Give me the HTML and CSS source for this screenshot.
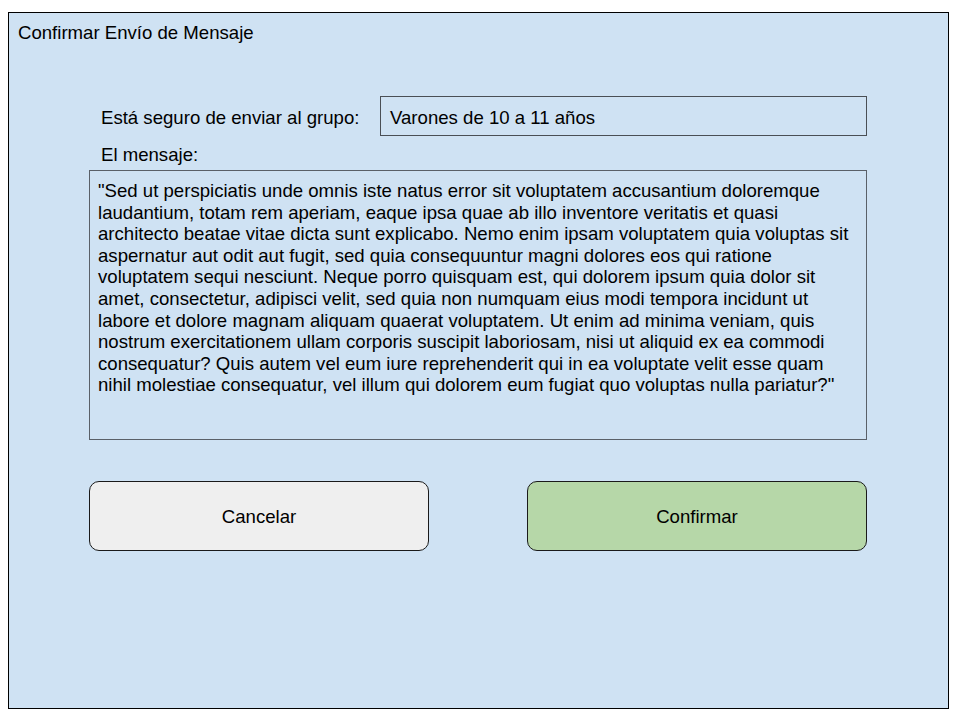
FILE: index.html
```html
<!DOCTYPE html>
<html lang="es">
<head>
<meta charset="utf-8">
<title>Confirmar Envío de Mensaje</title>
<link rel="stylesheet" href="styles.css">
</head>
<body>
<div class="frame">
  <div class="title">Confirmar Envío de Mensaje</div>
  <div class="content">
    <div class="group-row">
      <div class="group-label">Está seguro de enviar al grupo:</div>
      <div class="group-box">Varones de 10 a 11 años</div>
    </div>
    <div class="msg-label">El mensaje:</div>
    <div class="msg-box">"Sed ut perspiciatis unde omnis iste natus error sit voluptatem accusantium doloremque<br>laudantium, totam rem aperiam, eaque ipsa quae ab illo inventore veritatis et quasi<br>architecto beatae vitae dicta sunt explicabo. Nemo enim ipsam voluptatem quia voluptas sit<br>aspernatur aut odit aut fugit, sed quia consequuntur magni dolores eos qui ratione<br>voluptatem sequi nesciunt. Neque porro quisquam est, qui dolorem ipsum quia dolor sit<br>amet, consectetur, adipisci velit, sed quia non numquam eius modi tempora incidunt ut<br>labore et dolore magnam aliquam quaerat voluptatem. Ut enim ad minima veniam, quis<br>nostrum exercitationem ullam corporis suscipit laboriosam, nisi ut aliquid ex ea commodi<br>consequatur? Quis autem vel eum iure reprehenderit qui in ea voluptate velit esse quam<br>nihil molestiae consequatur, vel illum qui dolorem eum fugiat quo voluptas nulla pariatur?"</div>
    <div class="actions">
      <div class="btn btn-cancel">Cancelar</div>
      <div class="btn btn-confirm">Confirmar</div>
    </div>
  </div>
</div>
</body>
</html>
```

FILE: styles.css
```css
html, body {
  margin: 0;
  padding: 0;
  background: #ffffff;
}

body {
  font-family: "Liberation Sans", Arial, sans-serif;
  font-size: 18.6px;
  line-height: 21.6px;
  color: #000;
}

.frame {
  box-sizing: border-box;
  width: 941px;
  height: 697px;
  margin: 12px 0 0 8px;
  border: 1px solid #000;
  background: #cfe2f3;
  padding: 9px 0 0 9px;
}

.title {
  height: 21.6px;
}

.content {
  margin-left: 71px;
  width: 778px;
}

.group-row {
  display: flex;
  align-items: center;
  margin-top: 52.4px;
}

.group-label {
  box-sizing: border-box;
  width: 291px;
  padding-left: 12px;
  padding-top: 3px;
}

.group-box {
  box-sizing: border-box;
  width: 487px;
  height: 40px;
  border: 1px solid #4a4f55;
  padding: 3px 9px 0;
  display: flex;
  align-items: center;
}

.msg-label {
  margin-top: 8px;
  padding-left: 12px;
}

.msg-box {
  box-sizing: border-box;
  height: 270px;
  margin-top: 4.4px;
  border: 1px solid #5a6068;
  padding: 9px 8px;
}

.actions {
  display: flex;
  justify-content: space-between;
  margin-top: 41px;
}

.btn {
  box-sizing: border-box;
  width: 340px;
  height: 70px;
  border: 1px solid #1a1a1a;
  border-radius: 10px;
  padding-top: 2px;
  display: flex;
  align-items: center;
  justify-content: center;
}

.btn-cancel {
  background: #efefef;
}

.btn-confirm {
  background: #b6d7a8;
}
```
